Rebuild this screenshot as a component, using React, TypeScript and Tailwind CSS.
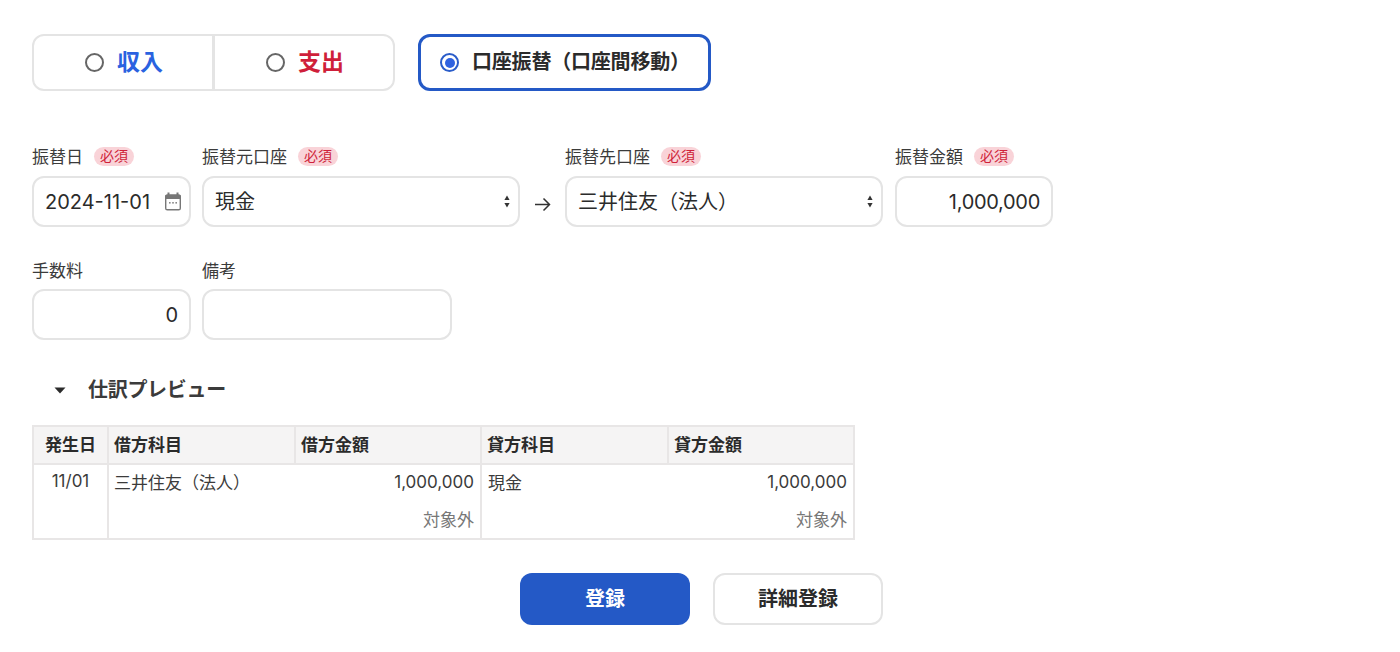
function Required() {
  return (
    <span className="ml-[11px] inline-flex h-[19px] w-[40px] -translate-y-[1px] items-center justify-center rounded-full bg-[#f9d3d8] text-[14px] text-[#cf1f3a]">
      必須
    </span>
  )
}

function Label({ text, required }: { text: string; required?: boolean }) {
  return (
    <div className="flex h-[22px] items-center text-[17px] leading-[22px] text-[#3b3b3b]">
      {text}
      {required && <Required />}
    </div>
  )
}

function Radio({ checked }: { checked?: boolean }) {
  return checked ? (
    <span className="flex h-[19px] w-[19px] items-center justify-center rounded-full border-2 border-[#2a5cc9]">
      <span className="h-[10px] w-[10px] rounded-full bg-[#2f62e0]" />
    </span>
  ) : (
    <span className="h-[19px] w-[19px] rounded-full border-2 border-[#666]" />
  )
}

function Field({ className, children }: { className: string; children?: React.ReactNode }) {
  return (
    <div className={`flex h-[51px] items-center rounded-[12px] border-2 border-[#e4e4e4] bg-white text-[20px] text-[#2b2b2b] ${className}`}>
      {children}
    </div>
  )
}

function SelectArrows() {
  return (
    <svg width="6" height="13" viewBox="0 0 6 13" className="ml-auto mr-[8px]">
      <path d="M3 0.5 L5.6 5 H0.4 Z" fill="#333" />
      <path d="M3 12.5 L5.6 8 H0.4 Z" fill="#333" />
    </svg>
  )
}

function CalendarIcon() {
  return (
    <svg width="18" height="19" viewBox="0 0 18 19" className="ml-auto mr-[-4px]">
      <rect x="3.5" y="0.5" width="2" height="3" fill="#777" />
      <rect x="12.5" y="0.5" width="2" height="3" fill="#777" />
      <path d="M1 4.5 Q1 2.5 3 2.5 H15 Q17 2.5 17 4.5 V7 H1 Z" fill="#777" />
      <rect x="1.7" y="3.2" width="14.6" height="14.6" rx="1.6" fill="none" stroke="#777" strokeWidth="1.4" />
      <rect x="5" y="10" width="1.6" height="1.6" fill="#888" />
      <rect x="8.2" y="10" width="1.6" height="1.6" fill="#888" />
      <rect x="11.4" y="10" width="1.6" height="1.6" fill="#888" />
    </svg>
  )
}

export default function App() {
  const th = 'border-2 border-[#e8e6e6] bg-[#f5f4f4] px-[5px] pt-[1px] text-[17px] font-bold text-[#2b2b2b]'
  const td = 'border-x-2 border-[#e8e6e6] text-[17px] text-[#3b3b3b]'

  return (
    <div className="min-h-[652px] bg-white pl-[32px] pt-[34px] font-['Inter','Noto_Sans_CJK_JP',sans-serif] text-[#2b2b2b]">
      <div className="flex gap-[23px]">
        <div className="flex h-[57px] w-[363px] rounded-[12px] border-2 border-[#e4e4e4]">
          <div className="flex w-[181px] items-center justify-center gap-[13px] border-r-[3px] border-[#e4e4e4] pl-[2px] text-[23px] font-bold text-[#2a62e0]">
            <Radio />
            収入
          </div>
          <div className="flex flex-1 items-center justify-center gap-[13px] pl-[2px] text-[23px] font-bold text-[#cf1f3a]">
            <Radio />
            支出
          </div>
        </div>
        <div className="flex h-[57px] w-[293px] items-center gap-[13px] rounded-[12px] border-[3px] border-[#2459c6] pl-[19px] text-[20px] font-bold tracking-[-0.2px] text-[#2b2b2b]">
          <Radio checked />
          <span className="pb-[2px]">口座振替（口座間移動）</span>
        </div>
      </div>

      <div className="mt-[55px] flex items-end">
        <div className="w-[159px]">
          <Label text="振替日" required />
          <Field className="mt-[8px] px-[11px]">
            2024-11-01
            <CalendarIcon />
          </Field>
        </div>
        <div className="ml-[11px] w-[318px]">
          <Label text="振替元口座" required />
          <Field className="mt-[8px] pl-[11px]">
            現金
            <SelectArrows />
          </Field>
        </div>
        <div className="flex h-[51px] w-[45px] items-center justify-center pt-[5px]">
          <svg width="17" height="15" viewBox="0 0 17 15" fill="none" stroke="#333" strokeWidth="1.5">
            <path d="M1 7.5 H15.5 M9.5 1.5 L15.5 7.5 L9.5 13.5" />
          </svg>
        </div>
        <div className="w-[318px]">
          <Label text="振替先口座" required />
          <Field className="mt-[8px] pl-[11px]">
            三井住友（法人）
            <SelectArrows />
          </Field>
        </div>
        <div className="ml-[12px] w-[158px]">
          <Label text="振替金額" required />
          <Field className="mt-[8px] justify-end pr-[11px] tracking-[-0.3px]">1,000,000</Field>
        </div>
      </div>

      <div className="mt-[33px] flex gap-[11px]">
        <div className="w-[159px]">
          <Label text="手数料" />
          <Field className="mt-[7px] justify-end pr-[11px]">0</Field>
        </div>
        <div className="w-[250px]">
          <Label text="備考" />
          <Field className="mt-[7px]" />
        </div>
      </div>

      <div className="mt-[37px] flex h-[26px] items-center pl-[22px] text-[20px] font-bold tracking-[-0.3px] text-[#3b3b3b]">
        <svg width="12" height="7" viewBox="0 0 12 7" className="mr-[22px]">
          <path d="M0.5 0.5 H11.5 L6 6.5 Z" fill="#2b2b2b" />
        </svg>
        仕訳プレビュー
      </div>

      <table className="mt-[22px] w-[821px] table-fixed border-collapse">
        <colgroup>
          <col className="w-[75px]" />
          <col className="w-[187px]" />
          <col className="w-[186px]" />
          <col className="w-[187px]" />
          <col className="w-[186px]" />
        </colgroup>
        <thead>
          <tr className="h-[38px]">
            <th className={`${th} text-center`}>発生日</th>
            <th className={`${th} text-left`}>借方科目</th>
            <th className={`${th} text-left`}>借方金額</th>
            <th className={`${th} text-left`}>貸方科目</th>
            <th className={`${th} text-left`}>貸方金額</th>
          </tr>
        </thead>
        <tbody>
          <tr className="border-b-2 border-[#e8e6e6]">
            <td className={`${td} h-[75px] pt-[4px] text-center align-top`}>11/01</td>
            <td colSpan={2} className={`${td} pl-[5px] pr-[6px] align-top`}>
              <div className="flex h-[36px] items-center justify-between">
                <span className="pt-[2px]">三井住友（法人）</span>
                <span className="pb-[1px]">1,000,000</span>
              </div>
              <div className="flex h-[37px] items-center justify-end pt-[3px] text-[#777]">対象外</div>
            </td>
            <td colSpan={2} className={`${td} pl-[6px] pr-[6px] align-top`}>
              <div className="flex h-[36px] items-center justify-between">
                <span className="pt-[2px]">現金</span>
                <span className="pb-[1px]">1,000,000</span>
              </div>
              <div className="flex h-[37px] items-center justify-end pt-[3px] text-[#777]">対象外</div>
            </td>
          </tr>
        </tbody>
      </table>

      <div className="mt-[33px] flex w-[1339px] justify-center gap-[23px]">
        <button className="h-[52px] w-[170px] rounded-[12px] bg-[#2459c6] text-[20px] font-bold text-white">登録</button>
        <button className="h-[52px] w-[170px] rounded-[12px] border-2 border-[#e4e4e4] bg-white text-[20px] font-bold text-[#2b2b2b]">詳細登録</button>
      </div>
    </div>
  )
}
